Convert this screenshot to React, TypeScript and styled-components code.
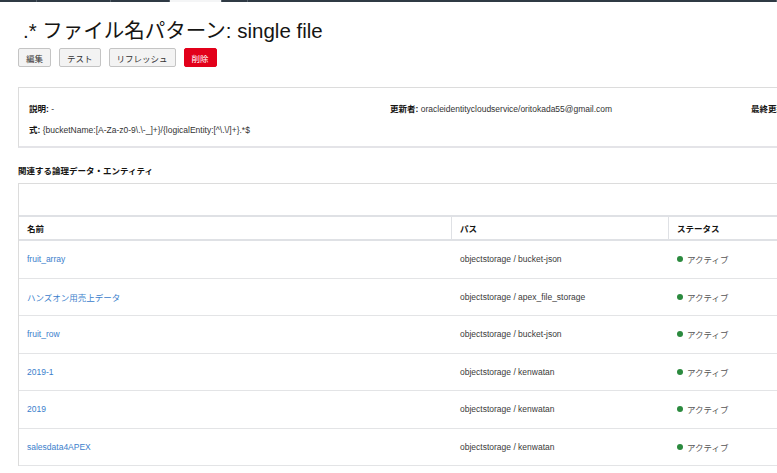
import React from "react";
import styled, { createGlobalStyle } from "styled-components";

const Global = createGlobalStyle`
  html, body { margin: 0; padding: 0; overflow: hidden; background: #fff; }
  body { font-family: "Liberation Sans", Arial, "Noto Sans CJK JP", sans-serif; color: #161513; }
`;

const TopStrip = styled.div`
  display: flex;
  height: 2px;
`;
const StripSeg = styled.div<{ $w: number; $light?: boolean }>`
  width: ${(p) => p.$w}px;
  flex: ${(p) => (p.$w === 0 ? 1 : "none")};
  background: ${(p) => (p.$light ? "#f4f5f6" : "#2f3a44")};
  border-right: 1px solid #55606a;
`;

const Page = styled.div`
  padding: 0 0 0 18px;
  width: 1000px;
`;

const Title = styled.h1`
  margin: 17px 0 0 5px;
  font-size: 20.5px;
  line-height: 24px;
  font-weight: 400;
  color: #161513;
  font-family: "Liberation Sans", Arial, "Noto Sans CJK JP", sans-serif;
`;

const Actions = styled.div`
  display: flex;
  gap: 8px;
  margin-top: 5px;
`;

const Button = styled.button<{ $danger?: boolean }>`
  height: 19px;
  padding: 0 7px;
  font-family: "Liberation Sans", Arial, "Noto Sans CJK JP", sans-serif;
  font-size: 8.5px;
  border-radius: 2px;
  border: 1px solid ${(p) => (p.$danger ? "#e2001a" : "#c4c4c4")};
  background: ${(p) => (p.$danger ? "#e2001a" : "#f3f3f3")};
  color: ${(p) => (p.$danger ? "#fff" : "#333")};
  cursor: pointer;
`;

const InfoBox = styled.div`
  margin-top: 20px;
  border: 1px solid #dcdcdc;
  border-bottom: 2px solid #e4e4e8;
  box-sizing: border-box;
  height: 61px;
  padding: 15px 0 0 10px;
  display: grid;
  grid-template-columns: 361px 361px 1fr;
  row-gap: 9px;
  align-content: start;
`;

const InfoItem = styled.div<{ $span?: number }>`
  grid-column: span ${(p) => p.$span ?? 1};
  font-size: 8.5px;
  line-height: 12px;
  color: #333;
  white-space: nowrap;
`;

const Label = styled.span`
  font-weight: 700;
  color: #161513;
`;

const SectionHeading = styled.h2`
  margin: 17px 0 0 0;
  font-size: 8.5px;
  line-height: 12px;
  font-weight: 700;
  color: #161513;
`;

const TableBox = styled.div`
  margin-top: 6px;
  border: 1px solid #dcdcdc;
  border-right: none;
  border-bottom: none;
`;

const Toolbar = styled.div`
  height: 31px;
`;

const HeaderRow = styled.div`
  display: grid;
  grid-template-columns: 432px 217px 1fr;
  border-top: 2px solid #dfe1e5;
  border-bottom: 2px solid #dfe1e5;
  height: 22px;
  box-sizing: content-box;
`;

const HeaderCell = styled.div<{ $first?: boolean }>`
  display: flex;
  align-items: center;
  padding-left: 8px;
  border-left: ${(p) => (p.$first ? "none" : "1px solid #dfe1e5")};
  font-size: 8.5px;
  font-weight: 700;
  color: #161513;
`;

const Row = styled.div`
  display: grid;
  grid-template-columns: 432px 217px 1fr;
  height: 37.5px;
  box-sizing: border-box;
  border-bottom: 1.5px solid #e3e4e6;
`;

const Cell = styled.div<{ $first?: boolean }>`
  display: flex;
  align-items: center;
  padding-left: ${(p) => (p.$first ? 8 : 9)}px;
  font-size: 8.5px;
  color: #3a3a3a;
  white-space: nowrap;
`;

const NameLink = styled.a`
  color: #3b80cc;
  text-decoration: none;
  font-size: 8.5px;
`;

const Dot = styled.span`
  display: inline-block;
  width: 6px;
  height: 6px;
  border-radius: 50%;
  background: #2b8a3e;
  margin-right: 4px;
`;

const StatusText = styled.span`
  color: #555;
  font-size: 8.5px;
`;

const rows = [
  { name: "fruit_array", path: "objectstorage / bucket-json" },
  { name: "ハンズオン用売上データ", path: "objectstorage / apex_file_storage" },
  { name: "fruit_row", path: "objectstorage / bucket-json" },
  { name: "2019-1", path: "objectstorage / kenwatan" },
  { name: "2019", path: "objectstorage / kenwatan" },
  { name: "salesdata4APEX", path: "objectstorage / kenwatan" },
];

export default function App() {
  return (
    <>
      <Global />
      <TopStrip>
        <StripSeg $w={36} />
        <StripSeg $w={73} />
        <StripSeg $w={58} />
        <StripSeg $w={51} $light />
        <StripSeg $w={25} />
        <StripSeg $w={0} />
      </TopStrip>
      <Page>
        <Title>.* ファイル名パターン: single file</Title>
        <Actions>
          <Button>編集</Button>
          <Button>テスト</Button>
          <Button>リフレッシュ</Button>
          <Button $danger>削除</Button>
        </Actions>
        <InfoBox>
          <InfoItem>
            <Label>説明:</Label> -
          </InfoItem>
          <InfoItem>
            <Label>更新者:</Label> oracleidentitycloudservice/oritokada55@gmail.com
          </InfoItem>
          <InfoItem>
            <Label>最終更新日:</Label> 2020/01/01
          </InfoItem>
          <InfoItem $span={3}>
            <Label>式:</Label> {"{bucketName:[A-Za-z0-9\\.\\-_]+}/{logicalEntity:[^\\.\\/]+}.*$"}
          </InfoItem>
        </InfoBox>
        <SectionHeading>関連する論理データ・エンティティ</SectionHeading>
        <TableBox>
          <Toolbar />
          <HeaderRow>
            <HeaderCell $first>名前</HeaderCell>
            <HeaderCell>パス</HeaderCell>
            <HeaderCell>ステータス</HeaderCell>
          </HeaderRow>
          {rows.map((r, i) => (
            <Row key={i}>
              <Cell $first>
                <NameLink href="#">{r.name}</NameLink>
              </Cell>
              <Cell>{r.path}</Cell>
              <Cell>
                <Dot />
                <StatusText>アクティブ</StatusText>
              </Cell>
            </Row>
          ))}
        </TableBox>
      </Page>
    </>
  );
}
